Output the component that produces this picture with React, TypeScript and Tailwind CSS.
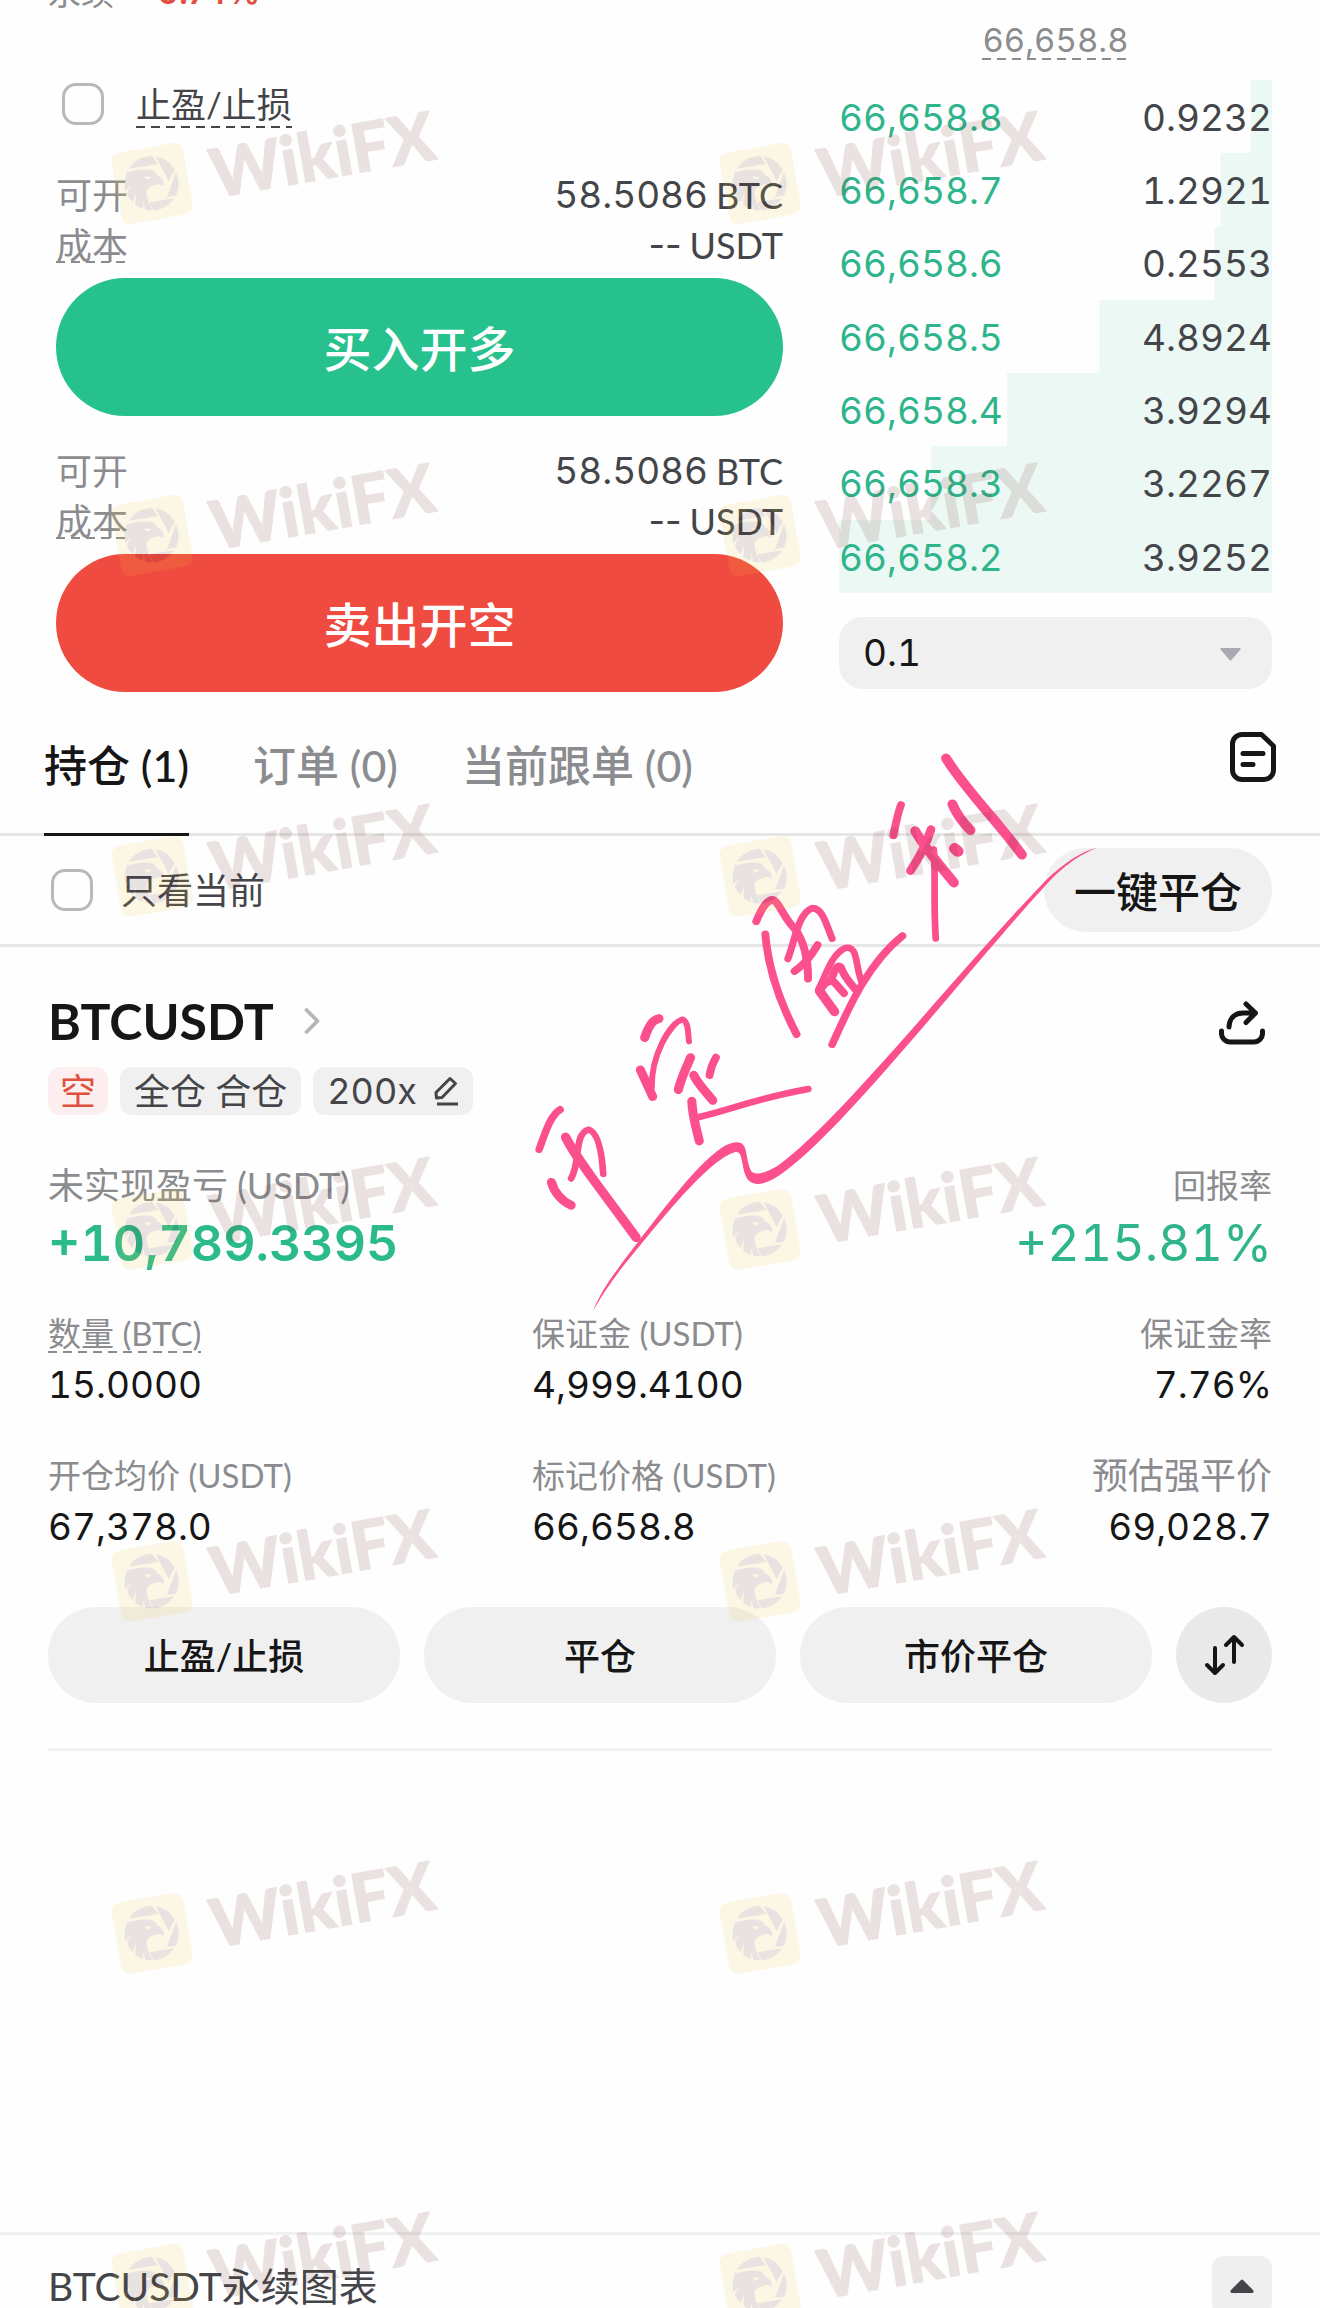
import React, { useState } from 'react';
import { ChevronRight } from 'lucide-react';

interface BookRow {
  price: string;
  amount: string;
  depth: number; // percent of the row that is filled
}

const BIDS: BookRow[] = [
  { price: '66,658.8', amount: '0.9232', depth: 5 },
  { price: '66,658.7', amount: '1.2921', depth: 12 },
  { price: '66,658.6', amount: '0.2553', depth: 13.4 },
  { price: '66,658.5', amount: '4.8924', depth: 40 },
  { price: '66,658.4', amount: '3.9294', depth: 61.2 },
  { price: '66,658.3', amount: '3.2267', depth: 78.7 },
  { price: '66,658.2', amount: '3.9252', depth: 100 },
];

const TABS = [
  { id: 'positions', label: '持仓', count: 1 },
  { id: 'orders', label: '订单', count: 0 },
  { id: 'copy', label: '当前跟单', count: 0 },
];

// Centre points of the watermark stamps
const STAMP_COLS = [152, 760];
const STAMP_ROWS = [184, 536, 877, 1230, 1582, 1934, 2285];

const Dashed: React.FC<{ children: React.ReactNode; className?: string }> = ({ children, className = '' }) => (
  <span
    className={`inline-block bg-[repeating-linear-gradient(90deg,currentColor_0_9px,transparent_9px_15px)] bg-[length:100%_2px] bg-bottom bg-no-repeat ${className}`}
  >
    {children}
  </span>
);

const Num: React.FC<{ children: React.ReactNode; className?: string }> = ({ children, className = '' }) => (
  <span className={`font-[Inter,'Noto_Sans_CJK_SC',sans-serif] tabular-nums ${className}`}>{children}</span>
);

/* ---------- icons ---------- */

const NoteIcon = () => (
  <svg className="h-[50px] w-[46px]" viewBox="0 0 46 50" fill="none" stroke="currentColor" strokeWidth="5" strokeLinecap="round" strokeLinejoin="round">
    <path d="M12 2.500H31.500L43.500 14V38A9.500 9.500 0 0 1 34 47.500H12A9.500 9.500 0 0 1 2.500 38V12A9.500 9.500 0 0 1 12 2.500Z" />
    <path d="M13 21.500H33M13 32.500H23" />
  </svg>
);

const ShareIcon = () => (
  <svg className="h-[44px] w-[46px]" viewBox="0 0 46 44" fill="none" stroke="currentColor" strokeWidth="5" strokeLinecap="round" strokeLinejoin="round">
    <path d="M2.500 30V33A8.500 8.500 0 0 0 11 41H35A8.500 8.500 0 0 0 43.500 33V30" />
    <path d="M10 26C10.500 17 16 12 24 12H35M27 3L36.500 12L27 21.500" />
  </svg>
);

const PencilIcon = () => (
  <svg className="h-[30px] w-[26px]" viewBox="0 0 26 30" fill="none" stroke="currentColor" strokeWidth="3" strokeLinejoin="round">
    <path d="M17 2.500L22.500 7.500L9 21.500L3.500 22L3 16.500Z" />
    <path d="M4 28H25" />
  </svg>
);

const SwapIcon = () => (
  <svg className="h-[42px] w-[42px]" viewBox="0 0 42 42" fill="none" stroke="currentColor" strokeWidth="4" strokeLinecap="round" strokeLinejoin="round">
    <path d="M12 14V38M4 31L12 39L20 31" />
    <path d="M31 28V4M23 11L31 3L39 11" />
  </svg>
);

/* ---------- overlays ---------- */

const Stamp: React.FC<{ x: number; y: number }> = ({ x, y }) => (
  <svg
    className="absolute h-[150px] w-[380px] opacity-[0.13]"
    style={{ left: x - 62, top: y - 94 }}
    viewBox="0 0 1140 450"
    aria-hidden="true"
  >
    <rect x="78" y="172" width="217" height="217" rx="26" fill="#f0c83c" transform="rotate(-10 186 281)" />
    <g fill="#59302b">
      <path d="M117 236A82 82 0 0 1 186 198L204 222Z" />
      <path d="M197 199A82 82 0 0 1 254 240L236 273Z" />
      <path d="M258 247A82 82 0 0 1 258 317L231 320Z" />
      <path d="M252 325A82 82 0 0 1 190 362L179 337Z" />
      <path d="M112 246C130 247 140 237 163 239C188 237 199 247 202 257C215 262 223 270 222 287L215 284C206 279 196 286 186 287C168 294 166 312 174 330L187 361C176 361 172 361 166 359L158 334L159 357C149 353 142 349 136 344L138 310L128 336C120 329 115 321 111 312L122 285L106 305C102 283 104 264 112 246Z" />
    </g>
    <path d="M163 258L184 262L178 267L168 266Z" fill="#f0c83c" />
    <text
      x="374"
      y="325"
      transform="rotate(-10 374 325)"
      className="font-[Lato,sans-serif] font-black"
      fontSize="203"
      fill="#652f28"
      stroke="#652f28"
      strokeWidth="3"
      strokeLinejoin="round"
    >
      WikiFX
    </text>
  </svg>
);

// Hand-written pink note with the long pen stroke below it
const PenNote = () => (
  <svg
    className="pointer-events-none absolute top-[730px] left-[500px] h-[600px] w-[620px]"
    viewBox="0 0 1568 1568"
    preserveAspectRatio="none"
    fill="none"
    stroke="#fb4f8e"
    strokeWidth="23"
    strokeLinecap="round"
    strokeLinejoin="round"
    aria-hidden="true"
  >
    <g strokeWidth="25">
      <path d="M1128 74C1180 160 1260 240 1320 326" />
      <path d="M1144 194C1155 220 1172 244 1190 262" />
      <path d="M1150 310L1158 317" strokeWidth="29" />
      <path d="M1014 196C1005 220 1000 250 995 275" strokeWidth="20" />
      <path d="M1050 264C1075 310 1110 350 1148 399" />
      <path d="M1090 260C1078 300 1056 340 1038 368" strokeWidth="22" />
      <path d="M1097 312C1102 400 1096 450 1102 545" strokeWidth="17" />
    </g>
    <g strokeWidth="20">
      <path d="M648 500C664 460 680 438 694 446C708 456 718 490 744 518C768 548 780 600 779 650" />
      <path d="M671 534C678 620 702 700 750 795" />
      <path d="M728 598C746 550 754 480 788 466C816 462 826 512 840 545" strokeWidth="18" />
      <path d="M803 562C786 592 766 616 745 630" />
      <path d="M808 682L846 736" strokeWidth="24" />
      <path d="M806 676C822 650 834 590 872 570C906 560 898 616 914 656" strokeWidth="17" />
      <path d="M812 676C826 652 842 654 846 660L870 688" />
      <path d="M838 652C846 628 852 612 862 620C872 650 886 660 904 684" />
      <path d="M840 822C880 730 930 610 1018 538" strokeWidth="19" />
    </g>
    <path d="M366 804C374 778 386 756 402 754" />
    <path d="M355 888L386 958" />
    <path d="M384 934C382 850 430 766 462 756C478 764 475 795 478 814" strokeWidth="15" />
    <path d="M482 856C470 884 458 910 451 940" />
    <path d="M546 856C538 870 532 888 530 902" strokeWidth="20" />
    <path d="M490 902C502 928 520 944 538 968" />
    <path d="M485 970C487 1010 496 1040 504 1074" />
    <path d="M500 1012C580 994 640 964 780 938" strokeWidth="17" />
    <path d="M152 992C126 1008 112 1060 99 1096" strokeWidth="19" />
    <path d="M166 1064C196 1126 270 1220 344 1326" strokeWidth="24" />
    <path d="M180 1172C204 1130 186 1056 224 1044C250 1052 258 1110 261 1160" strokeWidth="17" />
    <path d="M130 1182C138 1210 158 1232 180 1242" />
    <path
      stroke="none"
      fill="#fb4f8e"
      d="M234 1520C252 1476 275 1440 300 1405C400 1270 520 1100 584 1080C634 1066 616 1116 636 1154C650 1168 690 1148 706 1136C860 1020 1150 640 1380 393C1430 345 1470 318 1510 308C1470 325 1435 347 1387 398C1172 640 876 1037 715 1158C680 1184 650 1194 632 1180C608 1160 618 1098 596 1103C530 1120 410 1277 305 1410C275 1450 252 1488 234 1520Z"
    />
  </svg>
);

/* ---------- order form ---------- */

const OrderSide: React.FC<{ action: string; tone: string }> = ({ action, tone }) => (
  <div className="pl-2 text-[36px] leading-[50px]">
    <div className="flex justify-between">
      <span className="text-[#8b8c8f]">可开</span>
      <span className="flex gap-2 text-[#444549]">
        <Num className="text-[37px]">58.5086</Num>
        <span>BTC</span>
      </span>
    </div>
    <div className="flex items-center justify-between">
      <Dashed className="leading-[36px] text-[#8b8c8f]">成本</Dashed>
      <span className="flex gap-2 text-[#444549]">
        <span className="font-[Inter,sans-serif]">--</span>
        <span>USDT</span>
      </span>
    </div>
    <button type="button" className={`mt-2 h-[138px] w-full rounded-full pt-1 text-[48px] font-medium text-white ${tone}`}>
      {action}
    </button>
  </div>
);

const OrderBook = () => (
  <div className="pt-5">
    <div className="text-center text-[33px] leading-[39px] text-[#8b8c8f]">
      <Dashed>
        <Num>66,658.8</Num>
      </Dashed>
    </div>
    <table className="mt-5 h-[513px] w-full border-collapse font-[Inter,sans-serif] text-[37px] tabular-nums">
      <tbody>
        {BIDS.map((row) => (
          <tr
            key={row.price}
            style={{ background: `linear-gradient(to left, #ecf8f4 ${row.depth}%, transparent ${row.depth}%)` }}
          >
            <td className="p-0 pt-0.5 text-left text-[#2fb58c]">{row.price}</td>
            <td className="p-0 pt-0.5 text-right text-[#444549]">{row.amount}</td>
          </tr>
        ))}
      </tbody>
    </table>
    <div className="relative mt-6">
      <select
        aria-label="价格精度"
        className="h-[72px] w-full appearance-none rounded-3xl bg-[#f0f0f0] px-6 font-[Inter,sans-serif] text-[37px] text-[#161616] tabular-nums"
      >
        <option>0.1</option>
        <option>1</option>
        <option>10</option>
      </select>
      <svg className="pointer-events-none absolute top-[31px] right-[31px] h-[13px] w-[21px]" viewBox="0 0 21 13" fill="#a9aab0">
        <path d="M1.500 0H19.500Q21.500 0.500 20 2L11.500 12Q10.500 13 9.500 12L1 2Q-0.500 0.500 1.500 0Z" />
      </svg>
    </div>
  </div>
);

/* ---------- position ---------- */

interface StatProps {
  label: React.ReactNode;
  value: string;
  size?: string;
  align?: string;
}

const Stat: React.FC<StatProps> = ({ label, value, size = 'text-[33px]', align = '' }) => (
  <div className={align}>
    <div className={`leading-[40px] text-[#8b8c8f] ${size}`}>{label}</div>
    <Num className="mt-3 block text-[37px] leading-[40px] text-[#161616]">{value}</Num>
  </div>
);

const PositionCard = () => (
  <section className="px-12 pt-11">
    <div className="flex items-center justify-between text-[#161616]">
      <h2 className="flex items-center gap-4 text-[50px] leading-[60px] font-bold">
        BTCUSDT
        <ChevronRight className="size-11 text-[#b5b5b5]" strokeWidth={2} />
      </h2>
      <button type="button" aria-label="分享" className="pt-1 pr-[7px]">
        <ShareIcon />
      </button>
    </div>

    <div className="mt-4 flex gap-3 text-[36px] leading-[48px] text-[#444549]">
      <span className="rounded-xl bg-[#fdeff0] px-3 text-[#e0503f]">空</span>
      <span className="rounded-xl bg-[#f0f0f1] px-[14px]">全仓 合仓</span>
      <button type="button" className="flex items-center gap-4 rounded-xl bg-[#f0f0f1] px-[14px]">
        <Num>200x</Num>
        <PencilIcon />
      </button>
    </div>

    <div className="mt-[46px] flex justify-between text-[#8b8c8f]">
      <div>
        <div className="text-[36px] leading-[48px]">未实现盈亏 (USDT)</div>
        <Num className="mt-1 block text-[50px] leading-[60px] font-semibold text-[#2bba8c]">+10,789.3395</Num>
      </div>
      <div className="text-right">
        <div className="text-[33px] leading-[48px]">回报率</div>
        <Num className="mt-1 block text-[50px] leading-[60px] text-[#2fb58c]">+215.81%</Num>
      </div>
    </div>

    <div className="mt-10 grid grid-cols-[484fr_370fr_370fr] gap-y-[50px]">
      <Stat label={<Dashed>数量 (BTC)</Dashed>} value="15.0000" />
      <Stat label="保证金 (USDT)" value="4,999.4100" />
      <Stat label="保证金率" value="7.76%" align="text-right" />
      <Stat label="开仓均价 (USDT)" value="67,378.0" />
      <Stat label="标记价格 (USDT)" value="66,658.8" />
      <Stat label="预估强平价" value="69,028.7" align="text-right" size="text-[36px]" />
    </div>

    <div className="mt-[60px] flex gap-6 text-[36px] font-medium text-[#161616]">
      {['止盈/止损', '平仓', '市价平仓'].map((text) => (
        <button key={text} type="button" className="h-24 flex-1 rounded-full bg-[#f0f0f0] pt-0.5">
          {text}
        </button>
      ))}
      <button type="button" aria-label="反手" className="flex size-24 items-center justify-center rounded-full bg-[#e9e9e9]">
        <SwapIcon />
      </button>
    </div>
    <hr className="mt-[45px] border-t-[3px] border-[#f1f1f1]" />
  </section>
);

export default function App() {
  const [tab, setTab] = useState('positions');

  return (
    <main className="relative flex min-h-screen flex-col overflow-hidden bg-[#fefefe] font-[Lato,'Noto_Sans_CJK_SC',sans-serif]">
      <div className="grid grid-cols-[735fr_433fr] gap-14 px-12">
        <div>
          {/* Tail of the row above, scrolled mostly out of view */}
          <div className="flex h-3 items-end gap-7 overflow-hidden text-[33px] leading-[40px]">
            <span className="text-[#8b8c8f]">永续</span>
            <span className="font-[Inter,sans-serif] font-semibold text-[#e0503f]">-0.74%</span>
          </div>
          <label className="mt-[68px] flex h-12 items-center gap-8 pl-[14px] text-[35px] text-[#444549]">
            <input type="checkbox" className="size-[42px] appearance-none rounded-[14px] border-[3px] border-[#b9b9b9]" />
            <Dashed className="leading-[48px]">止盈/止损</Dashed>
          </label>
          <div className="mt-[42px] flex flex-col gap-[30px]">
            <OrderSide action="买入开多" tone="bg-[#26c18c]" />
            <OrderSide action="卖出开空" tone="bg-[#f04b40]" />
          </div>
        </div>
        <OrderBook />
      </div>

      <nav className="mt-2 flex h-[136px] justify-between border-b-[3px] border-[#e6e6e6] px-11">
        <div className="flex gap-16 text-[43px]">
          {TABS.map((t) => (
            <button
              key={t.id}
              type="button"
              onClick={() => setTab(t.id)}
              className={`-mb-[3px] border-b-[3px] font-medium ${
                tab === t.id ? 'border-[#161616] text-[#161616]' : 'border-transparent text-[#8b8c8f]'
              }`}
            >
              {t.label} ({t.count})
            </button>
          ))}
        </div>
        <button type="button" aria-label="历史记录" className="pb-5 text-[#161616]">
          <NoteIcon />
        </button>
      </nav>

      <div className="flex h-[111px] items-center justify-between border-b-[3px] border-[#e6e6e6] pr-12 pl-[51px]">
        <label className="flex items-center gap-7 text-[36px] text-[#444549]">
          <input type="checkbox" className="size-[42px] appearance-none rounded-[14px] border-[3px] border-[#b9b9b9]" />
          只看当前
        </label>
        <button type="button" className="h-[84px] rounded-full bg-[#f0f0f0] px-[30px] pt-1 text-[42px] font-medium text-[#161616]">
          一键平仓
        </button>
      </div>

      <PositionCard />

      <footer className="mt-auto flex h-[76px] items-start justify-between overflow-hidden border-t-[3px] border-[#f0f0f0] px-12 pt-[21px]">
        <span className="mt-2 text-[39px] leading-[44px] text-[#444549]">BTCUSDT永续图表</span>
        <button type="button" aria-label="展开图表" className="flex size-[60px] shrink-0 items-center justify-center rounded-xl bg-[#efefef]">
          <svg className="h-[14px] w-[24px]" viewBox="0 0 24 14" fill="#444549">
            <path d="M11 1Q12 0 13 1L23 11Q24.500 14 22 14H2Q-0.500 14 1 11Z" />
          </svg>
        </button>
      </footer>

      <PenNote />
      <div className="pointer-events-none absolute inset-0 overflow-hidden">
        {STAMP_ROWS.map((y) => STAMP_COLS.map((x) => <Stamp key={`${x}-${y}`} x={x} y={y} />))}
      </div>
    </main>
  );
}
